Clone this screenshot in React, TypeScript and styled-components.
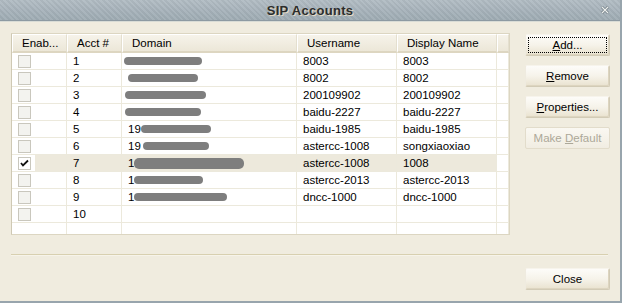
import React from "react";
import styled, { createGlobalStyle, css } from "styled-components";

const Global = createGlobalStyle`
  html, body { margin: 0; padding: 0; }
  body { background: #f0ecdf; font-family: "Liberation Sans", Arial, sans-serif; }
  #root { width: 622px; height: 303px; }
`;

const Window = styled.div`
  width: 622px;
  height: 303px;
  box-sizing: border-box;
  background: #f0ecdf;
  border-right: 2px solid #98a5ad;
  border-bottom: 2px solid #98a5ad;
  display: flex;
  flex-direction: column;
  overflow: hidden;
`;

const TitleBar = styled.div`
  height: 20px;
  flex: none;
  position: relative;
  display: flex;
  align-items: center;
  justify-content: center;
  background:
    repeating-linear-gradient(45deg, rgba(255,255,255,0.06) 0 2px, rgba(0,0,0,0.03) 2px 4px),
    linear-gradient(#b1bcc3, #a5b1b9 60%, #9eabb3);
  border-bottom: 1px solid #8d9aa2;
  box-shadow: 0 1px 0 #d9dcd6;
`;

const Title = styled.span`
  font-family: "Liberation Sans", Arial, sans-serif;
  font-weight: bold;
  font-size: 13px;
  color: #2c2c2c;
  text-shadow: 1px 1px 0 #e6dcc4;
  letter-spacing: 0.3px;
`;

const CloseGlyph = styled.svg`
  position: absolute;
  right: 11px;
  top: 6px;
`;

const Body = styled.div`
  flex: 1;
  display: flex;
  flex-direction: column;
  padding: 12px 10px 0 11px;
`;

const TopRow = styled.div`
  display: flex;
  align-items: flex-start;
`;

const ListView = styled.div`
  width: 499px;
  height: 202px;
  box-sizing: border-box;
  border: 1px solid #dcd6c2;
  border-left-color: #cfc9b4;
  background: #fff;
  overflow: hidden;
`;

const COLS = "55px 55px 175px 100px 100px 12px";

const HeaderRow = styled.div`
  display: grid;
  grid-template-columns: ${COLS};
  height: 19px;
`;

const HeaderCell = styled.div`
  box-sizing: border-box;
  height: 19px;
  padding-left: 9px;
  display: flex;
  align-items: center;
  font-size: 11.5px;
  color: #000;
  white-space: nowrap;
  background: linear-gradient(#f6f3ea, #ece7d8);
  border-top: 1px solid #fff;
  border-left: 1px solid #fff;
  border-right: 1px solid #e4dfcf;
  border-bottom: 2px solid #ddd6c1;
`;

const Row = styled.div`
  display: grid;
  grid-template-columns: ${COLS};
  height: 17px;
`;

const Cell = styled.div<{ $selected?: boolean }>`
  box-sizing: border-box;
  height: 17px;
  padding-left: 6px;
  display: flex;
  align-items: center;
  font-size: 11.5px;
  color: #000;
  white-space: nowrap;
  overflow: hidden;
  border-right: 1px solid #ece9dc;
  border-bottom: 1px solid #ece9dc;
  ${(p) =>
    p.$selected &&
    css`
      background: #ede9dc;
    `}
`;

const CheckCell = styled(Cell)<{ $selected?: boolean }>`
  padding-left: 6px;
  ${(p) =>
    p.$selected &&
    css`
      background: linear-gradient(to right, #fff 0 23px, #ede9dc 23px);
    `}
`;

const CheckBox = styled.div<{ $checked?: boolean }>`
  width: 13px;
  height: 13px;
  box-sizing: border-box;
  border: 1px solid #c9c7bd;
  background: ${(p) => (p.$checked ? "#fff" : "#f3f3ef")};
  display: flex;
  align-items: center;
  justify-content: center;
`;

const Blob = styled.span<{ $h: number }>`
  display: inline-block;
  height: ${(p) => p.$h}px;
  background: #7e7e7e;
  border-radius: 5px;
  filter: blur(0.4px);
`;

const Filler = styled.div`
  display: grid;
  grid-template-columns: ${COLS};
  height: 12px;
`;

const FillerCell = styled.div`
  border-right: 1px solid #ece9dc;
`;

const ButtonColumn = styled.div`
  display: flex;
  flex-direction: column;
  gap: 9px;
  margin-left: 15px;
  padding-top: 1px;
`;

const Button = styled.button<{ $focused?: boolean }>`
  position: relative;
  width: 85px;
  height: 22px;
  box-sizing: border-box;
  padding: 0;
  font-family: "Liberation Sans", Arial, sans-serif;
  font-size: 11.5px;
  color: #000;
  background: linear-gradient(#fdfcf9, #f6f3ea 50%, #e9e2cf);
  border: 1px solid #d2cbb6;
  border-top-color: #f7f4ec;
  border-left-color: #efebe0;
  border-radius: 2px;
  box-shadow: inset -1px -1px 0 #ddd5c0;
  &:disabled {
    color: #aca899;
    background: linear-gradient(#faf8f2, #f1ede2);
    border-color: #e2dccb;
    box-shadow: none;
  }
  ${(p) =>
    p.$focused &&
    css`
      &::after {
        content: "";
        position: absolute;
        inset: 2px;
        border: 1px dotted #000;
      }
    `}
  u { text-decoration: underline; text-underline-offset: 1px; }
`;

const Separator = styled.div`
  margin-top: 19px;
  height: 1px;
  width: 597px;
  background: #d8d0b0;
  box-shadow: 0 1px 0 #f7f4ea;
`;

const Footer = styled.div`
  display: flex;
  justify-content: flex-end;
  padding-top: 13px;
`;

type Acct = {
  n: number;
  prefix?: string;
  blob?: [number, number, number]; // offset, width, height
  user: string;
  disp: string;
  checked?: boolean;
};

const rows: Acct[] = [
  { n: 1, blob: [-4, 78, 8], user: "8003", disp: "8003" },
  { n: 2, blob: [0, 70, 8], user: "8002", disp: "8002" },
  { n: 3, blob: [-3, 81, 8], user: "200109902", disp: "200109902" },
  { n: 4, blob: [-3, 76, 8], user: "baidu-2227", disp: "baidu-2227" },
  { n: 5, prefix: "19", blob: [0, 70, 8], user: "baidu-1985", disp: "baidu-1985" },
  { n: 6, prefix: "19", blob: [2, 66, 8], user: "astercc-1008", disp: "songxiaoxiao" },
  { n: 7, prefix: "1", blob: [0, 110, 11], user: "astercc-1008", disp: "1008", checked: true },
  { n: 8, prefix: "1", blob: [0, 69, 8], user: "astercc-2013", disp: "astercc-2013" },
  { n: 9, prefix: "1", blob: [0, 93, 8], user: "dncc-1000", disp: "dncc-1000" },
];

const Check = () => (
  <svg width="9" height="9" viewBox="0 0 9 9">
    <path d="M1 4 L3 6.5 L8 1.5" stroke="#111" strokeWidth="1.8" fill="none" />
  </svg>
);

export default function App() {
  return (
    <>
      <Global />
      <Window>
        <TitleBar>
          <Title>SIP Accounts</Title>
          <CloseGlyph width="8" height="8" viewBox="0 0 8 8">
            <path d="M1 1 L7 7 M7 1 L1 7" stroke="#6d7a82" strokeWidth="2.6" />
            <path d="M1 1 L7 7 M7 1 L1 7" stroke="#eef0ee" strokeWidth="1.2" />
          </CloseGlyph>
        </TitleBar>
        <Body>
          <TopRow>
            <ListView>
              <HeaderRow>
                <HeaderCell>Enab...</HeaderCell>
                <HeaderCell>Acct #</HeaderCell>
                <HeaderCell>Domain</HeaderCell>
                <HeaderCell>Username</HeaderCell>
                <HeaderCell>Display Name</HeaderCell>
                <HeaderCell />
              </HeaderRow>
              {rows.map((r) => {
                const sel = !!r.checked;
                return (
                  <Row key={r.n}>
                    <CheckCell $selected={sel}>
                      <CheckBox $checked={r.checked}>{r.checked && <Check />}</CheckBox>
                    </CheckCell>
                    <Cell $selected={sel}>{r.n}</Cell>
                    <Cell $selected={sel}>
                      {r.prefix}
                      {r.blob && (
                        <Blob
                          $h={r.blob[2]}
                          style={{ marginLeft: r.blob[0], width: r.blob[1] }}
                        />
                      )}
                    </Cell>
                    <Cell $selected={sel}>{r.user}</Cell>
                    <Cell $selected={sel}>{r.disp}</Cell>
                    <Cell />
                  </Row>
                );
              })}
              <Row>
                <CheckCell>
                  <CheckBox />
                </CheckCell>
                <Cell>10</Cell>
                <Cell />
                <Cell />
                <Cell />
                <Cell />
              </Row>
              <Filler>
                <FillerCell />
                <FillerCell />
                <FillerCell />
                <FillerCell />
                <FillerCell />
                <FillerCell />
              </Filler>
            </ListView>
            <ButtonColumn>
              <Button $focused>
                <u>A</u>dd...
              </Button>
              <Button>
                <u>R</u>emove
              </Button>
              <Button>
                <u>P</u>roperties...
              </Button>
              <Button disabled>
                Make <u>D</u>efault
              </Button>
            </ButtonColumn>
          </TopRow>
          <Separator />
          <Footer>
            <Button>Close</Button>
          </Footer>
        </Body>
      </Window>
    </>
  );
}
